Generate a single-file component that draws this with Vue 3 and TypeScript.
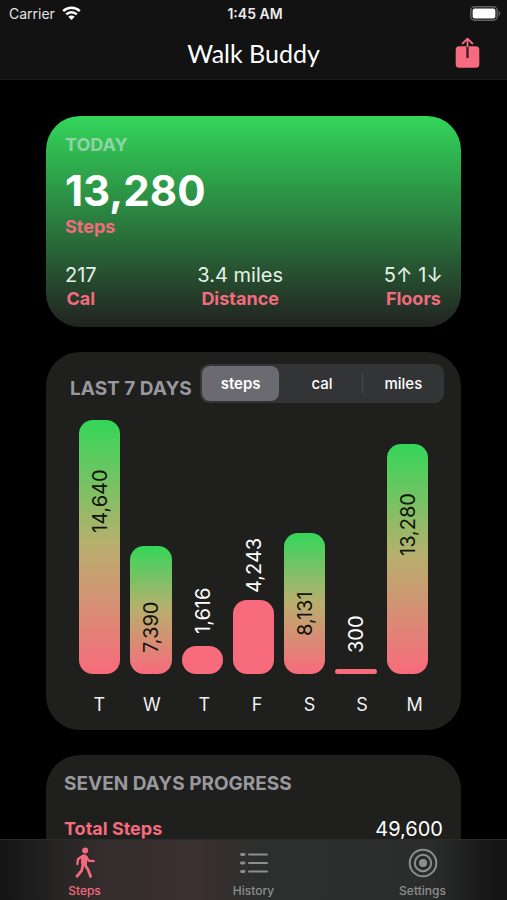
<script setup lang="ts">
import { computed, ref } from 'vue'

type Unit = 'steps' | 'cal' | 'miles'

interface Day {
  name: string
  steps: number
}

const units: Unit[] = ['steps', 'cal', 'miles']
const unit = ref<Unit>('steps')

const days: Day[] = [
  { name: 'T', steps: 14640 },
  { name: 'W', steps: 7390 },
  { name: 'T', steps: 1616 },
  { name: 'F', steps: 4243 },
  { name: 'S', steps: 8131 },
  { name: 'S', steps: 300 },
  { name: 'M', steps: 13280 },
]

const goal = 5000
const most = Math.max(...days.map((d) => d.steps))
const total = days.reduce((sum, d) => sum + d.steps, 0)

const format = (steps: number): string => {
  if (unit.value === 'cal') return String(Math.round((steps * 217) / 13280))
  if (unit.value === 'miles') return ((steps * 3.4) / 13280).toFixed(1)
  return steps.toLocaleString('en-US')
}

const bars = computed(() =>
  days.map((d) => ({
    label: format(d.steps),
    height: (d.steps / most) * 100 + '%',
    high: d.steps >= goal,
  })),
)

const today = [
  { value: '217', label: 'Cal' },
  { value: '3.4 miles', label: 'Distance' },
  { value: '5↑ 1↓', label: 'Floors' },
]
</script>

<template>
  <div class="app">
    <header class="top">
      <div class="status">
        <div class="carrier">
          <span>Carrier</span>
          <svg width="19" height="14" viewBox="0 0 19 14" aria-hidden="true">
            <g fill="none" stroke="#fff" stroke-width="2.5">
              <path d="M1.2 5.1a11.8 11.8 0 0 1 16.6 0" />
              <path d="M4.2 8.3a7.6 7.6 0 0 1 10.6 0" />
            </g>
            <path d="M9.5 14 6.3 10.7a4.6 4.6 0 0 1 6.4 0z" fill="#fff" />
          </svg>
        </div>
        <time class="clock">1:45 AM</time>
        <div class="battery">
          <svg width="31" height="15" viewBox="0 0 31 15" aria-hidden="true">
            <rect x="0.8" y="0.8" width="26.4" height="13.4" rx="4" fill="none" stroke="#636363" stroke-width="1.5" />
            <rect x="2.6" y="2.6" width="22.8" height="9.8" rx="2.2" fill="#fff" />
            <path d="M28.6 5c2.2.8 2.2 4.2 0 5z" fill="#636363" />
          </svg>
        </div>
      </div>
      <div class="nav">
        <h1>Walk Buddy</h1>
        <button class="share" type="button" aria-label="Share">
          <svg width="26" height="32" viewBox="0 0 26 32" aria-hidden="true">
            <rect x="0.7" y="9.3" width="23.6" height="21.5" rx="3.5" fill="#f86b7e" />
            <path d="M12.5 9v12" stroke="#3d1c22" stroke-width="2.4" />
            <path d="M12.500 9.300V1.700M7.600 6.500l4.900-4.900 4.900 4.900" fill="none" stroke="#f86b7e" stroke-width="1.8" stroke-linecap="round" stroke-linejoin="round" />
          </svg>
        </button>
      </div>
    </header>

    <main class="content">
      <section class="card today">
        <h2>TODAY</h2>
        <p class="count">13,280</p>
        <p class="accent">Steps</p>
        <ul class="stats">
          <li v-for="s in today" :key="s.label">
            <span class="value">{{ s.value }}</span>
            <span class="accent">{{ s.label }}</span>
          </li>
        </ul>
      </section>

      <section class="card week">
        <div class="week-head">
          <h2>LAST 7 DAYS</h2>
          <div class="segments">
            <button
              v-for="u in units"
              :key="u"
              type="button"
              :class="{ active: u === unit }"
              :aria-pressed="u === unit"
              @click="unit = u"
            >
              {{ u }}
            </button>
          </div>
        </div>
        <div class="chart">
          <div v-for="(b, i) in bars" :key="i" class="column">
            <span v-if="!b.high" class="number">{{ b.label }}</span>
            <div class="bar" :class="{ high: b.high }" :style="{ height: b.height }">
              <span v-if="b.high" class="number">{{ b.label }}</span>
            </div>
          </div>
        </div>
        <div class="names">
          <span v-for="(d, i) in days" :key="i">{{ d.name }}</span>
        </div>
      </section>

      <section class="card progress">
        <h2>SEVEN DAYS PROGRESS</h2>
        <div class="line">
          <span class="accent">Total Steps</span>
          <span class="value">{{ total.toLocaleString('en-US') }}</span>
        </div>
      </section>
    </main>

    <nav class="tabs">
      <a href="#steps" class="current" aria-current="page">
        <svg width="32" height="32" viewBox="0 0 32 32" aria-hidden="true">
          <circle cx="16.2" cy="3.4" r="3" fill="currentColor" />
          <path d="M12.6 9.200c1.200-1.900 4.500-1.800 5.100.3l-.2 8.400-4.900-.7z" fill="currentColor" stroke="currentColor" stroke-width="1" stroke-linejoin="round" />
          <g fill="none" stroke="currentColor" stroke-width="2.3" stroke-linecap="round" stroke-linejoin="round">
            <path d="M13.600 8.900 9 12.200 8.400 17" />
            <path d="M17 9.400l2.700 4.300 5 .4" />
            <path d="M15.500 17.200l3.500 5.400 2.600 6.900" stroke-width="2.8" />
            <path d="M14 17.500l-1.400 6.200-4.700 5.600" stroke-width="2.8" />
          </g>
        </svg>
        <span>Steps</span>
      </a>
      <a href="#history">
        <svg width="32" height="32" viewBox="0 0 32 32" aria-hidden="true">
          <g fill="none" stroke="currentColor" stroke-width="2" stroke-linecap="round">
            <path d="M11 7.5h18M11 16h18M11 24.5h18" />
            <path d="M3.5 7.5h2.500M3.500 16h2.500M3.500 24.500h2.500" stroke-width="2.8" />
          </g>
        </svg>
        <span>History</span>
      </a>
      <a href="#settings">
        <svg width="32" height="32" viewBox="0 0 32 32" aria-hidden="true">
          <g fill="none" stroke="currentColor" stroke-width="2">
            <circle cx="16" cy="16" r="13.3" />
            <circle cx="16" cy="16" r="8.2" />
          </g>
          <circle cx="16" cy="16" r="4" fill="currentColor" />
        </svg>
        <span>Settings</span>
      </a>
    </nav>
  </div>
</template>

<style>
body {
  background: #000;
}
</style>

<style scoped>
.app {
  display: flex;
  flex-direction: column;
  height: 100vh;
  background: #000;
  color: #fff;
  font-family: Inter, 'Liberation Sans', sans-serif;
}

h1,
h2,
p,
ul {
  margin: 0;
  padding: 0;
}

button {
  border: 0;
  padding: 0;
  background: none;
  color: inherit;
  font: inherit;
  cursor: pointer;
}

.top {
  box-sizing: border-box;
  height: 80px;
  flex: none;
  background: #121212;
  border-bottom: 1px solid #1c1c1c;
}

.status {
  display: grid;
  grid-template-columns: 1fr auto 1fr;
  align-items: center;
  height: 26px;
  padding: 0 6px 0 9px;
  font-size: 14px;
}

.carrier {
  display: flex;
  align-items: center;
  gap: 7px;
  color: #e4e4e4;
}

.clock {
  font-weight: 600;
  color: #ececec;
}

.battery {
  display: flex;
  justify-content: flex-end;
}

.nav {
  display: grid;
  grid-template-columns: 1fr auto 1fr;
  align-items: center;
  height: 53px;
  padding: 0 26px;
}

h1 {
  grid-column: 2;
  font: 400 25px/34px Lato, sans-serif;
}

.share {
  justify-self: end;
  display: flex;
}

.content {
  flex: 1;
  min-height: 0;
  overflow: hidden auto;
  scrollbar-width: none;
  display: flex;
  flex-direction: column;
  gap: 25px;
  padding: 36px 46px 0;
}

.card {
  flex: none;
  border-radius: 34px;
  background: #1f1f1d;
}

h2 {
  font-size: 18px;
  line-height: 24px;
  font-weight: 700;
  color: #98989d;
}

.accent {
  font-size: 18px;
  line-height: 24px;
  font-weight: 700;
  color: #f46b7e;
}

.value {
  font-size: 20px;
  line-height: 24px;
}

.today {
  padding: 17px 18px 16px 19px;
  background: linear-gradient(#33d65b, #222221);
}

.today h2 {
  color: rgba(235, 235, 245, 0.5);
}

.count {
  margin-top: 10px;
  font-size: 42px;
  line-height: 48px;
  font-weight: 700;
}

.stats {
  display: flex;
  justify-content: space-between;
  margin-top: 24px;
  list-style: none;
}

.stats li {
  display: flex;
  flex-direction: column;
  align-items: center;
}

.stats .value {
  color: #e6f2e8;
}

.week {
  padding: 12px 0 13px;
}

.week-head {
  display: flex;
  align-items: flex-end;
  justify-content: space-between;
  padding: 0 17px 0 24px;
}

.week h2,
.progress h2 {
  font-size: 19px;
}

.week h2 {
  line-height: 28px;
}

.segments {
  display: grid;
  grid-template-columns: repeat(3, 1fr);
  gap: 4px;
  box-sizing: border-box;
  width: 244px;
  height: 39px;
  padding: 2px;
  border-radius: 9px;
  background: #323436;
}

.segments button {
  position: relative;
  border-radius: 8px;
  font-size: 15px;
  font-weight: 500;
}

.segments .active {
  background: #6b6a70;
  font-weight: 600;
}

.segments button:not(.active) + button::before {
  content: '';
  position: absolute;
  left: -3px;
  top: 7px;
  bottom: 7px;
  width: 1px;
  background: #46484a;
}

.chart {
  display: grid;
  grid-template-columns: repeat(7, 1fr);
  gap: 10px;
  height: 254px;
  margin-top: 17px;
  padding: 0 33px;
}

.column {
  display: flex;
  flex-direction: column;
  justify-content: flex-end;
  min-height: 0;
}

.bar {
  box-sizing: border-box;
  flex: none;
  border-radius: 14px;
  background: #f86b7c;
}

.high {
  padding-top: 46px;
  background: linear-gradient(#34d65a, #b6b06d 48%, #f86b7c);
  color: #10140c;
}

.number {
  display: flex;
  align-items: center;
  justify-content: center;
  width: 100%;
  height: 70px;
  writing-mode: vertical-rl;
  transform: rotate(180deg);
  font-size: 20px;
  line-height: 24px;
}

.names {
  display: grid;
  grid-template-columns: repeat(7, 1fr);
  margin-top: 19px;
  padding: 0 20px 0 27px;
  font-size: 18px;
  line-height: 24px;
  text-align: center;
  color: #f0f0f0;
}

.progress {
  padding: 17px 18px 60px;
}

.line {
  display: flex;
  justify-content: space-between;
  margin-top: 21px;
}

.tabs {
  flex: none;
  display: grid;
  grid-template-columns: repeat(3, 1fr);
  box-sizing: border-box;
  height: 61px;
  border-top: 1px solid #2c2c2c;
  background: linear-gradient(90deg, #141414, #222121 9%, #352d2d 20%, #3b3030 38%, #2d2f2e 50%, #2b2d2c 85%, #191919 95%, #141414);
}

.tabs a {
  display: flex;
  flex-direction: column;
  align-items: center;
  padding-top: 7px;
  font-size: 12px;
  line-height: 24px;
  font-weight: 500;
  color: #8e8e8e;
  text-decoration: none;
}

.tabs .current {
  color: #f46b7e;
}
</style>
